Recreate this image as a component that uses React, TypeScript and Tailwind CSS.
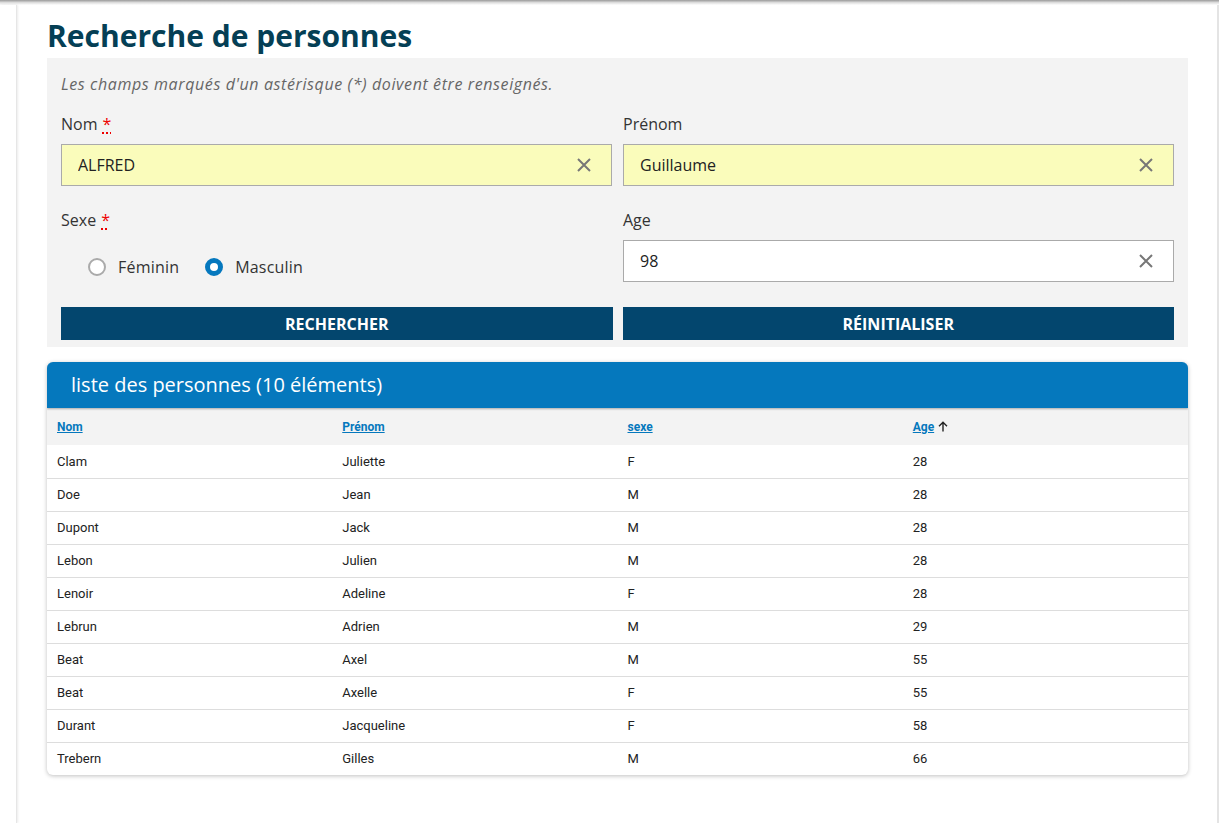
import React, { useState } from 'react';

interface Person {
  nom: string;
  prenom: string;
  sexe: string;
  age: number;
}

const personnes: Person[] = [
  { nom: 'Clam', prenom: 'Juliette', sexe: 'F', age: 28 },
  { nom: 'Doe', prenom: 'Jean', sexe: 'M', age: 28 },
  { nom: 'Dupont', prenom: 'Jack', sexe: 'M', age: 28 },
  { nom: 'Lebon', prenom: 'Julien', sexe: 'M', age: 28 },
  { nom: 'Lenoir', prenom: 'Adeline', sexe: 'F', age: 28 },
  { nom: 'Lebrun', prenom: 'Adrien', sexe: 'M', age: 29 },
  { nom: 'Beat', prenom: 'Axel', sexe: 'M', age: 55 },
  { nom: 'Beat', prenom: 'Axelle', sexe: 'F', age: 55 },
  { nom: 'Durant', prenom: 'Jacqueline', sexe: 'F', age: 58 },
  { nom: 'Trebern', prenom: 'Gilles', sexe: 'M', age: 66 },
];

function ClearIcon() {
  return (
    <svg width="14" height="14" viewBox="0 0 14 14" className="shrink-0">
      <path d="M1 1L13 13M13 1L1 13" stroke="#777" strokeWidth="2" />
    </svg>
  );
}

function Required() {
  return (
    <abbr
      title="obligatoire"
      className="text-[#e00] underline decoration-dotted decoration-[#e00] decoration-2 underline-offset-2 ml-[5px]"
    >
      *
    </abbr>
  );
}

function TextField({
  label,
  value,
  required,
  filled,
}: {
  label: string;
  value: string;
  required?: boolean;
  filled?: boolean;
}) {
  return (
    <div className="flex flex-col">
      <label className="text-[16px] leading-6 text-[#333] mb-2">
        {label}
        {required && <Required />}
      </label>
      <div
        className={`flex items-center h-[42px] border border-[#aaa] pl-4 pr-[20px] ${
          filled ? 'bg-[#fafcbb]' : 'bg-white'
        }`}
      >
        <input
          className="flex-1 min-w-0 bg-transparent outline-none text-[16px] text-[#222]"
          defaultValue={value}
        />
        <ClearIcon />
      </div>
    </div>
  );
}

function Radio({ label, checked }: { label: string; checked?: boolean }) {
  return (
    <label className="flex items-center gap-[12px] text-[16px] text-[#333] tracking-[0.2px]">
      {checked ? (
        <span className="w-[18px] h-[18px] rounded-full border-[5px] border-[#0578be] bg-white" />
      ) : (
        <span className="w-[18px] h-[18px] rounded-full border-2 border-[#aaa] bg-white" />
      )}
      {label}
    </label>
  );
}

export default function App() {
  const [sexe] = useState('M');

  return (
    <div className="min-h-screen bg-white font-['Open_Sans',sans-serif] relative">
      {/* ombre du bandeau */}
      <div className="h-[5px] bg-gradient-to-b from-[#9a9a9a] via-[#dcdcdc] to-white" />
      <div className="flex">
        <div className="w-[17px] shrink-0 border-r border-[#e6e6e6] shadow-[1px_0_2px_rgba(0,0,0,0.08)] min-h-[818px]" />
        <main className="flex-1 pl-[30px] pr-[29px] border-r-2 border-[#e4e4e4]">
          <h1 className="text-[30px] font-bold text-[#053f55] leading-[36px] mt-[13px] mb-[4px]">
            Recherche de personnes
          </h1>

          {/* Formulaire */}
          <div className="bg-[#f3f3f3] pl-[14px] pr-[14px] pt-[14px] pb-[7px]">
            <p className="italic text-[16px] leading-6 text-[#666] tracking-[0.6px]">
              Les champs marqués d'un astérisque (*) doivent être renseignés.
            </p>
            <div className="grid grid-cols-2 gap-x-[11px] mt-4">
              <TextField label="Nom" value="ALFRED" required filled />
              <TextField label="Prénom" value="Guillaume" filled />
            </div>
            <div className="grid grid-cols-2 gap-x-[11px] mt-[22px]">
              <div className="flex flex-col">
                <label className="text-[16px] leading-6 text-[#333] mb-2">
                  Sexe
                  <Required />
                </label>
                <div className="flex items-center gap-[26px] h-[42px] pl-[27px] pt-[12px]">
                  <Radio label="Féminin" checked={sexe === 'F'} />
                  <Radio label="Masculin" checked={sexe === 'M'} />
                </div>
              </div>
              <TextField label="Age" value="98" />
            </div>
            <div className="grid grid-cols-2 gap-x-[10px] mt-[25px]">
              <button className="h-[33px] bg-[#03466e] text-white font-bold text-[16px] uppercase">
                Rechercher
              </button>
              <button className="h-[33px] bg-[#03466e] text-white font-bold text-[16px] uppercase">
                Réinitialiser
              </button>
            </div>
          </div>

          {/* Liste */}
          <div className="mt-[15px] rounded-md shadow-[0_1px_4px_rgba(0,0,0,0.25)] bg-white overflow-hidden">
            <div className="h-[46px] bg-[#0578bd] flex items-center pl-6 text-white text-[20px] shadow-[0_1px_2px_rgba(0,0,0,0.3)] relative">
              liste des personnes (10 éléments)
            </div>
            <table className="w-full table-fixed font-['Roboto',sans-serif] text-[13px] text-[#222]">
              <thead>
                <tr className="bg-[#f3f3f3] h-[37px]">
                  {['Nom', 'Prénom', 'sexe', 'Age'].map((h) => (
                    <th key={h} className="text-left font-bold text-[12px] px-[10px]">
                      <span className="inline-flex items-center gap-[4px]">
                        <a href="#" className="text-[#0578bd] underline">
                          {h}
                        </a>
                        {h === 'Age' && (
                          <svg width="10" height="11" viewBox="0 0 10 11">
                            <path d="M5 10.5V1.5M1 5.2L5 1.2L9 5.2" stroke="#222" strokeWidth="1.4" fill="none" />
                          </svg>
                        )}
                      </span>
                    </th>
                  ))}
                </tr>
              </thead>
              <tbody>
                {personnes.map((p, i) => (
                  <tr key={i} className={`h-[33px] ${i > 0 ? 'border-t border-[#ddd]' : ''}`}>
                    <td className="px-[10px]">{p.nom}</td>
                    <td className="px-[10px]">{p.prenom}</td>
                    <td className="px-[10px]">{p.sexe}</td>
                    <td className="px-[10px]">{p.age}</td>
                  </tr>
                ))}
              </tbody>
            </table>
          </div>
        </main>
      </div>
    </div>
  );
}
